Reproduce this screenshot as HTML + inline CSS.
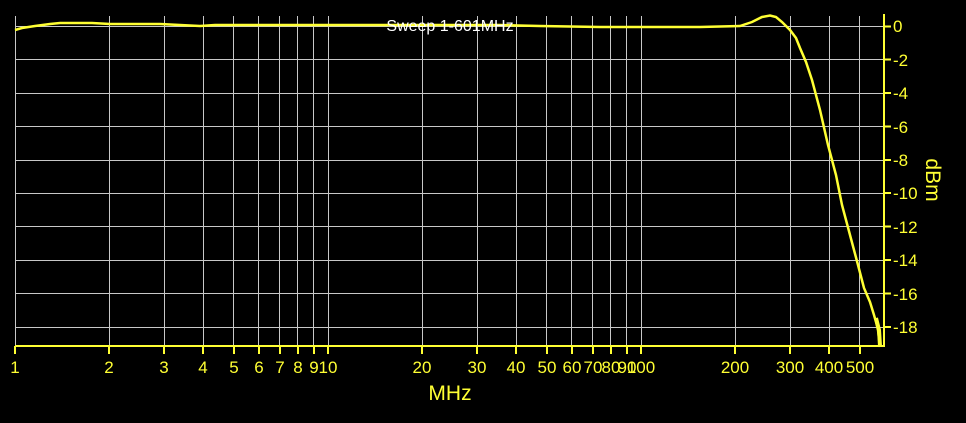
<!DOCTYPE html>
<html><head><meta charset="utf-8"><style>
html,body{margin:0;padding:0;background:#000;width:966px;height:423px;overflow:hidden}
svg{display:block}
text{font-family:"Liberation Sans",sans-serif}
</style></head><body>
<svg width="966" height="423" viewBox="0 0 966 423">
<g stroke="#c8c8c8" stroke-width="1" fill="none">
<path d="M15.5 16V347M109.5 16V347M164.5 16V347M203.5 16V347M233.5 16V347M258.5 16V347M279.5 16V347M297.5 16V347M313.5 16V347M328.5 16V347M422.5 16V347M477.5 16V347M516.5 16V347M546.5 16V347M571.5 16V347M592.5 16V347M610.5 16V347M626.5 16V347M641.5 16V347M735.5 16V347M790.5 16V347M829.5 16V347M859.5 16V347"/>
<path d="M15 26.5H884M15 59.5H884M15 93.5H884M15 126.5H884M15 160.5H884M15 193.5H884M15 226.5H884M15 260.5H884M15 293.5H884M15 327.5H884"/>
</g>
<g stroke="#ffff33" stroke-width="2" fill="none">
<path d="M15 346H885M884 14V347"/>
<path d="M15 346v8M109 346v8M164 346v8M203 346v8M234 346v8M259 346v8M280 346v8M298 346v8M314 346v8M328 346v8M422 346v8M477 346v8M516 346v8M547 346v8M572 346v8M593 346v8M611 346v8M627 346v8M641 346v8M735 346v8M790 346v8M829 346v8M860 346v8"/>
<path d="M884 26.5h7M884 59.5h7M884 93h7M884 126.5h7M884 160h7M884 193h7M884 226.5h7M884 260h7M884 293.5h7M884 327h7"/>
<path stroke-width="2.5" d="M15 30L22 28L35 26L50 24L60 23L92 23L110 24L160 24L180 25L200 26L215 25L300 25L400 25L500 25L540 26L600 27L640 27L700 27L740 26L752 22L762 17L770 15.5L776 17L782 22L790 30L796 38L800 48L806 62L812 80L820 110L828 145L836 175L842 205L850 235L858 265L864 288L870 302L874 315L876 322L878 330L880 347"/>
<path stroke-width="4" d="M876 318L879 330L880 346"/>
</g>
<text x="450" y="31" fill="#fff" font-size="16" text-anchor="middle">Sweep 1-601MHz</text>
<g fill="#ffff33" font-size="17" text-anchor="middle">
<text x="15" y="373">1</text><text x="109" y="373">2</text><text x="164" y="373">3</text><text x="203" y="373">4</text><text x="234" y="373">5</text><text x="259" y="373">6</text><text x="280" y="373">7</text><text x="298" y="373">8</text><text x="314" y="373">9</text><text x="328" y="373">10</text><text x="422" y="373">20</text><text x="477" y="373">30</text><text x="516" y="373">40</text><text x="547" y="373">50</text><text x="572" y="373">60</text><text x="593" y="373">70</text><text x="611" y="373">80</text><text x="627" y="373">90</text><text x="641" y="373">100</text><text x="735" y="373">200</text><text x="790" y="373">300</text><text x="829" y="373">400</text><text x="860" y="373">500</text>
<text x="450" y="400" font-size="21">MHz</text>
</g>
<g fill="#ffff33" font-size="17">
<text x="893" y="32">0</text><text x="893" y="66">-2</text><text x="893" y="99">-4</text><text x="893" y="133">-6</text><text x="893" y="166">-8</text><text x="893" y="199">-10</text><text x="893" y="233">-12</text><text x="893" y="266">-14</text><text x="893" y="300">-16</text><text x="893" y="333">-18</text>
<text transform="translate(926,180) rotate(90)" font-size="21" text-anchor="middle">dBm</text>
</g>
</svg>
</body></html>
